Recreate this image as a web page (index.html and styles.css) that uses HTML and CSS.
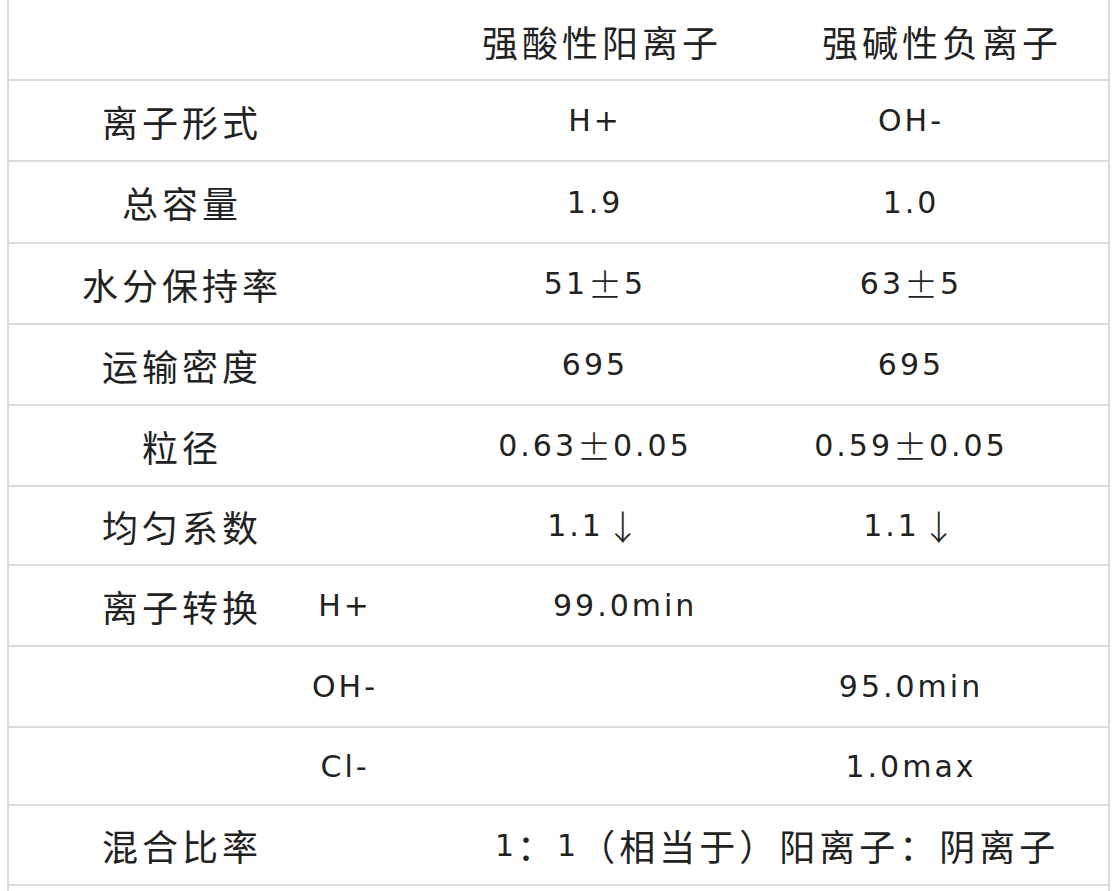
FILE: index.html
```html
<!DOCTYPE html>
<html lang="zh-CN">
<head>
<meta charset="utf-8">
<title>离子交换树脂参数</title>
<link rel="stylesheet" href="styles.css">
</head>
<body>
<div class="table">
  <div class="row r0">
    <div class="cell c1"></div>
    <div class="cell c2"></div>
    <div class="cell c3 zh head3">强酸性阳离子</div>
    <div class="cell c4 zh head4">强碱性负离子</div>
  </div>
  <div class="row r1">
    <div class="cell c1 zh label">离子形式</div>
    <div class="cell c2"></div>
    <div class="cell c3 num">H+</div>
    <div class="cell c4 num v4">OH-</div>
  </div>
  <div class="row r2">
    <div class="cell c1 zh label">总容量</div>
    <div class="cell c2"></div>
    <div class="cell c3 num">1.9</div>
    <div class="cell c4 num v4">1.0</div>
  </div>
  <div class="row r3">
    <div class="cell c1 zh label">水分保持率</div>
    <div class="cell c2"></div>
    <div class="cell c3 num">51<span class="pm">±</span>5</div>
    <div class="cell c4 num v4">63<span class="pm">±</span>5</div>
  </div>
  <div class="row r4">
    <div class="cell c1 zh label">运输密度</div>
    <div class="cell c2"></div>
    <div class="cell c3 num">695</div>
    <div class="cell c4 num v4">695</div>
  </div>
  <div class="row r5">
    <div class="cell c1 zh label">粒径</div>
    <div class="cell c2"></div>
    <div class="cell c3 num">0.63<span class="pm">±</span>0.05</div>
    <div class="cell c4 num v4">0.59<span class="pm">±</span>0.05</div>
  </div>
  <div class="row r6">
    <div class="cell c1 zh label">均匀系数</div>
    <div class="cell c2"></div>
    <div class="cell c3 num">1.1<span class="arw">↓</span></div>
    <div class="cell c4 num v4">1.1<span class="arw">↓</span></div>
  </div>
  <div class="row r7">
    <div class="cell c1 zh label">离子转换</div>
    <div class="cell c2 num sub">H+</div>
    <div class="cell c3 num left3">99.0min</div>
    <div class="cell c4"></div>
  </div>
  <div class="row r8">
    <div class="cell c1"></div>
    <div class="cell c2 num sub">OH-</div>
    <div class="cell c3"></div>
    <div class="cell c4 num v4">95.0min</div>
  </div>
  <div class="row r9">
    <div class="cell c1"></div>
    <div class="cell c2 num sub">Cl-</div>
    <div class="cell c3"></div>
    <div class="cell c4 num v4">1.0max</div>
  </div>
  <div class="row r10">
    <div class="cell c1 zh label">混合比率</div>
    <div class="cell c2"></div>
    <div class="cell c34 zh merged"><span class="num">1</span>：<span class="num">1</span>（相当于）阳离子：阴离子</div>
  </div>
  <div class="row tail"></div>
</div>
</body>
</html>
```
FILE: styles.css
```css
html, body {
  margin: 0;
  padding: 0;
  background: #ffffff;
}

body {
  color: #222222;
  font-family: "Noto Sans CJK SC", sans-serif;
}

.table {
  margin-left: 7px;
  width: 1103px;
  border-left: 2px solid #d9d9d9;
  border-right: 2px solid #d9d9d9;
  box-sizing: border-box;
}

.row {
  display: grid;
  grid-template-columns: 291px 100px 390px 1fr;
  border-bottom: 2px solid #dadada;
  box-sizing: border-box;
}

.r0 { height: 81px; }
.r1 { height: 81px; }
.r2 { height: 82px; }
.r3 { height: 81px; }
.r4 { height: 81px; }
.r5 { height: 81px; }
.r6 { height: 79px; }
.r7 { height: 81px; }
.r8 { height: 81px; }
.r9 { height: 78px; }
.r10 { height: 80px; }
.tail { height: 10px; border-bottom: none; }

.cell {
  display: flex;
  align-items: center;
  justify-content: center;
  white-space: nowrap;
  box-sizing: border-box;
}

.c34 {
  grid-column: 3 / 5;
}

.zh {
  font-family: "Noto Sans CJK SC", sans-serif;
  font-size: 36px;
  letter-spacing: 4px;
  font-weight: 400;
}

.num {
  font-family: "DejaVu Sans", "Noto Sans CJK SC", sans-serif;
  font-size: 30px;
  letter-spacing: 3px;
}

.pm {
  font-family: "Noto Sans CJK SC", sans-serif;
  font-size: 34px;
  font-weight: 300;
  letter-spacing: 2px;
}

.arw {
  font-family: "Noto Sans CJK SC", sans-serif;
  font-size: 34px;
  font-weight: 300;
  margin-left: 2px;
}

.head3 { padding-left: 14px; padding-top: 2px; }
.head4 { padding-right: 14px; padding-top: 2px; }

.label { padding-left: 55px; }

.sub { padding-right: 10px; }

.v4 { padding-right: 76px; }

.left3 {
  justify-content: flex-start;
  padding-left: 153px;
}

.merged {
  justify-content: flex-start;
  padding-left: 95px;
}

.merged .num {
  font-size: 30px;
}
```
